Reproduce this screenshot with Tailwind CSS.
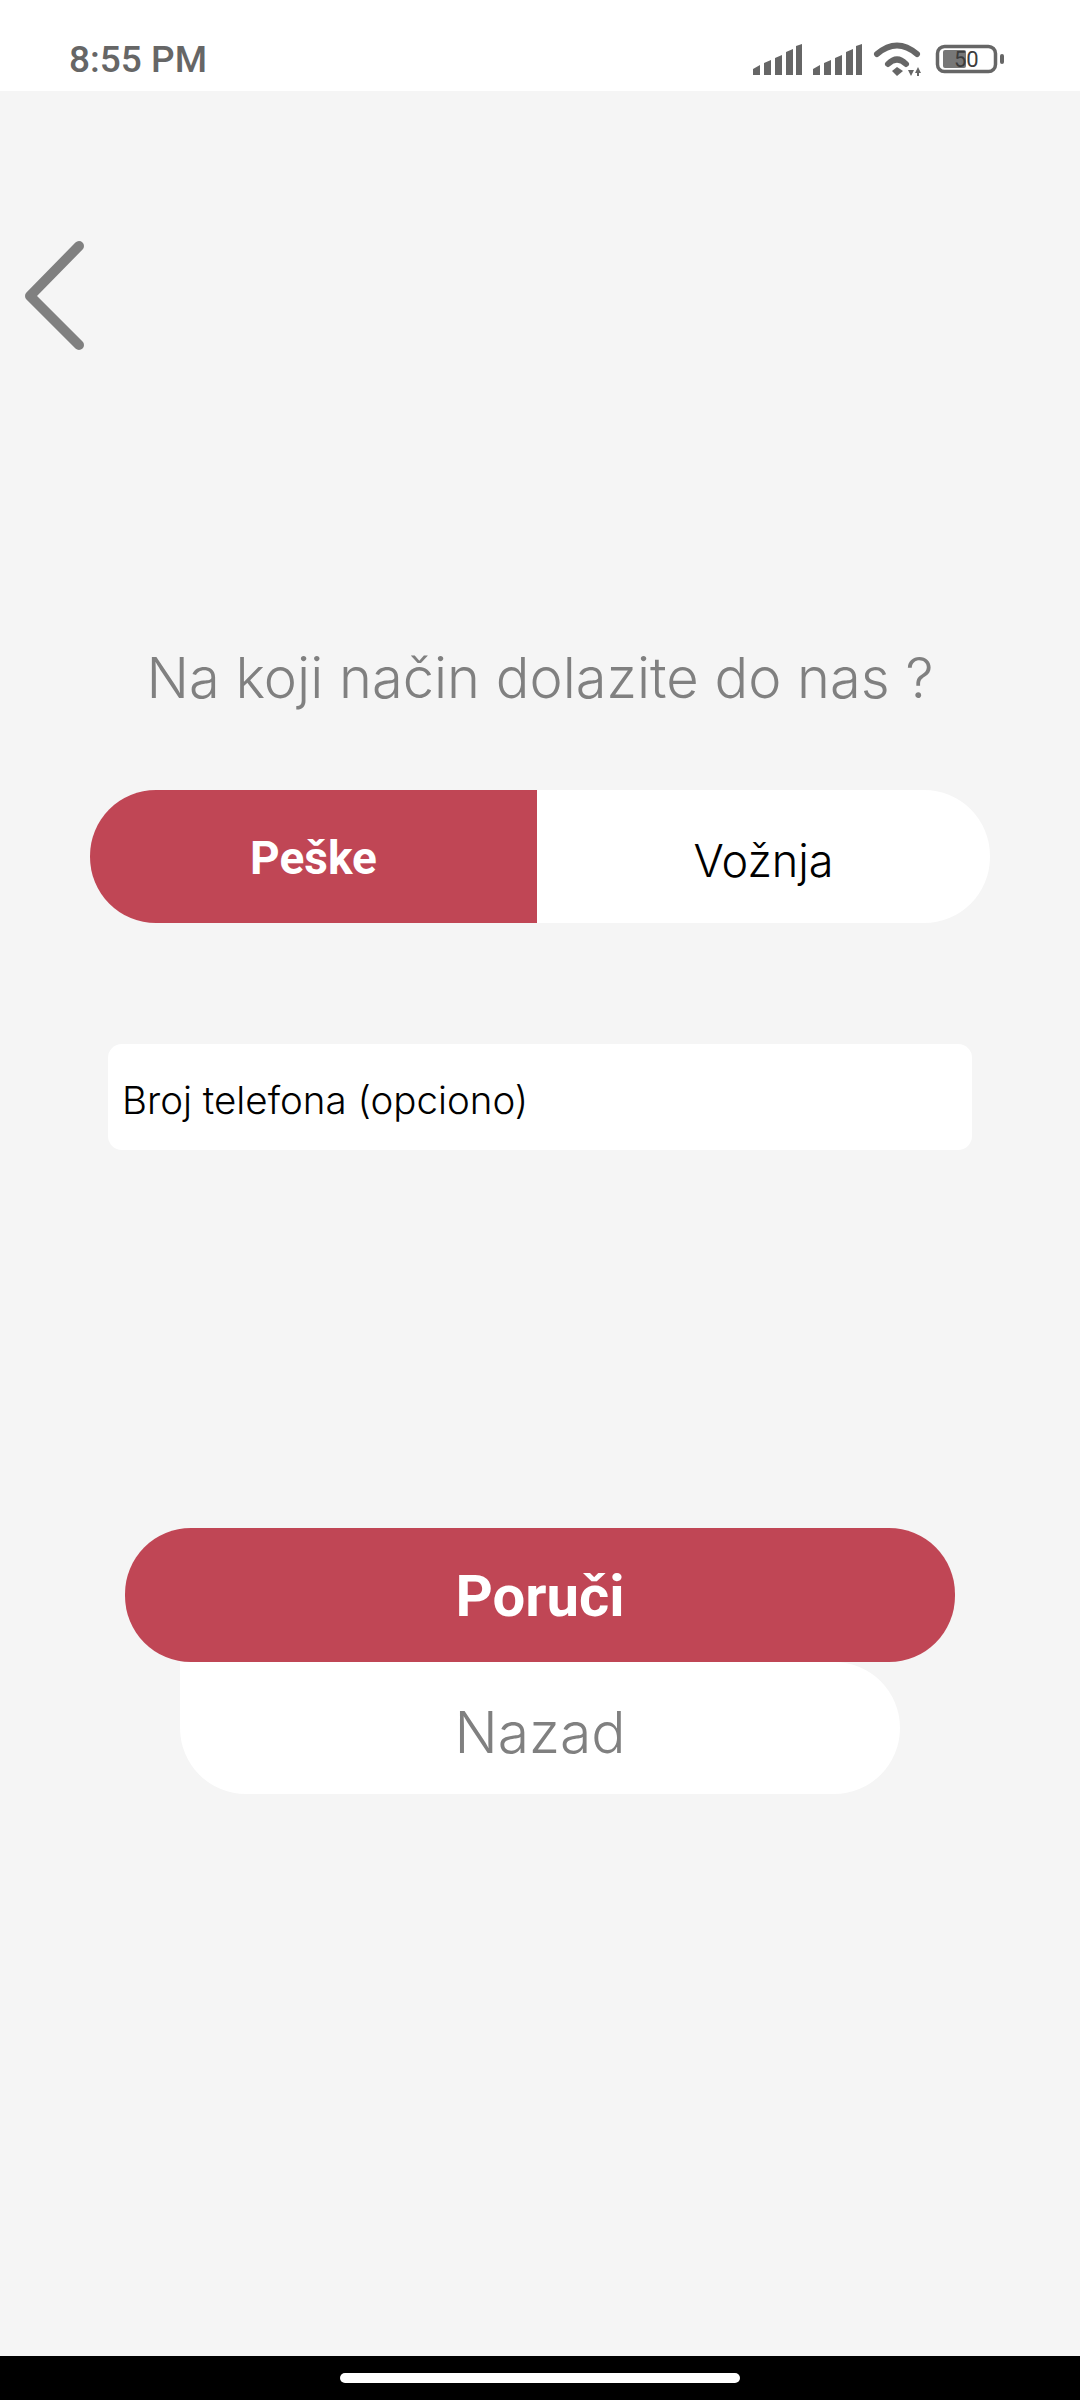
<!DOCTYPE html>
<html lang="en">
<head>
    <meta charset="UTF-8" />
    <meta name="viewport" content="width=device-width, initial-scale=1.0">
    <title>Poručivanje</title>
    <script src="https://cdn.jsdelivr.net/npm/@tailwindcss/browser@4"></script>
</head>
<body class="bg-[#f5f5f5] font-['Inter',sans-serif]">
<div class="h-[2400px] w-[1080px] flex flex-col overflow-hidden">

    <!-- Status bar -->
    <div class="h-[91px] shrink-0 bg-white relative">
        <span class="absolute left-[69px] top-[38px] text-[37px] leading-[44px] font-medium text-[#666] font-['Roboto',sans-serif]">8:55 PM</span>
        <svg class="absolute left-[750px] top-[40px]" width="256" height="38" viewBox="750 40 256 38" fill="#666">
            <!-- signal 1 -->
            <path d="M753 69l7-4v10h-7zM764 63l7-3v15h-7zM775 58l7-3v20h-7zM786 52l7-3v26h-7zM796 46l6-2v31h-6z"/>
            <!-- signal 2 -->
            <path d="M813 69l7-4v10h-7zM824 63l7-3v15h-7zM835 58l7-3v20h-7zM846 52l7-3v26h-7zM856 46l6-2v31h-6z"/>
            <!-- wifi -->
            <path d="M877 54Q897 37 917 54" fill="none" stroke="#666" stroke-width="6" stroke-linecap="round"/>
            <path d="M888 64Q897 55 906 64" fill="none" stroke="#666" stroke-width="6" stroke-linecap="round"/>
            <path d="M892 71l5-4 6 4-6 5z"/>
            <path d="M908 70h6l-3 6zM915 73l3-6 3 6h-2v3h-2v-3z"/>
            <!-- battery -->
            <rect x="937.500" y="46.500" width="58" height="25" rx="7" fill="none" stroke="#666" stroke-width="3.500"/>
            <rect x="943" y="50" width="23" height="18" rx="2" fill="#777"/>
            <rect x="1000" y="54" width="4" height="10" rx="2"/>
        </svg>
        <span class="absolute left-[954px] top-[47px] text-[22px] leading-[26px] text-[#3c3c3c] font-['Roboto',sans-serif]">50</span>
    </div>

    <!-- Back -->
    <div class="h-[599px] shrink-0 pl-[24px] pt-[149px]">
        <svg width="64" height="116" viewBox="24 240 64 116" fill="none" stroke="#808080" stroke-width="10" stroke-linecap="round" stroke-linejoin="round">
            <path d="M79 246 30 296l49 49"/>
        </svg>
    </div>

    <!-- Title -->
    <h1 class="-mt-[50px] h-[80px] text-center text-[56px] leading-[76px] font-light text-[#808080]">Na koji način dolazite do nas ?</h1>

    <!-- Toggle -->
    <div class="mt-[70px] mx-[90px] h-[133px] flex">
        <div class="w-[447px] rounded-l-[66px] bg-[#c04655] flex items-center justify-center pt-[3px] text-white text-[46px] font-bold font-['Roboto',sans-serif]">Peške</div>
        <div class="flex-1 rounded-r-[66px] bg-white flex items-center justify-center text-black text-[45px] font-light pt-[8px]">Vožnja</div>
    </div>

    <!-- Phone input -->
    <div class="mt-[121px] mx-[108px] h-[106px] rounded-[14px] bg-white flex items-center pl-[14px] pt-[8px] text-[38.500px] text-black font-light">Broj telefona (opciono)</div>

    <!-- Buttons -->
    <div class="mt-[378px] mx-[125px] h-[134px] rounded-[66px] bg-[#c04655] flex items-center justify-center pt-[3px] text-white text-[58px] font-bold font-['Roboto',sans-serif] relative z-10">Poruči</div>
    <div class="mx-[180px] h-[132px] rounded-[66px] rounded-tl-none bg-white flex items-center justify-center pt-[9px] text-[#808080] text-[57px] font-light">Nazad</div>

    <!-- Nav bar -->
    <div class="mt-auto h-[44px] bg-black flex justify-center pt-[17px]">
        <div class="w-[400px] h-[10px] rounded-full bg-white"></div>
    </div>
</div>
</body>
</html>
